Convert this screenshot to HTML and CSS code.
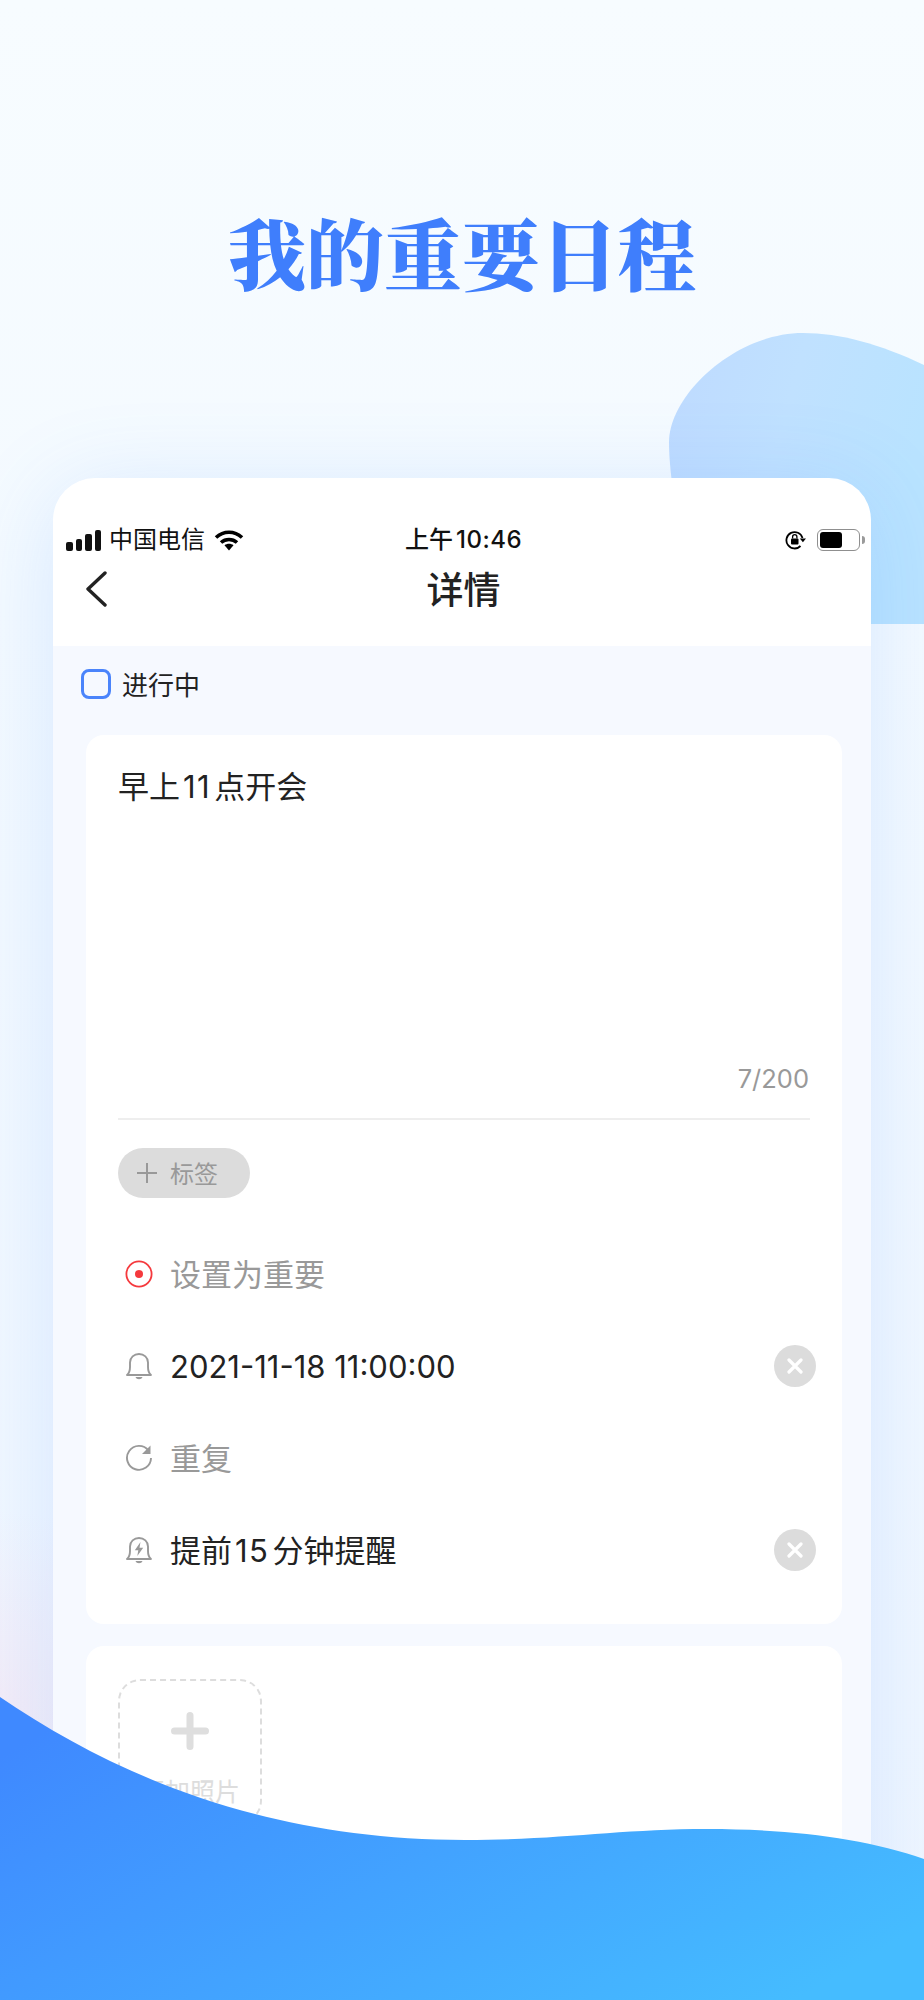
FILE: index.html
```html
<!DOCTYPE html>
<html lang="zh-CN">
<head>
  <meta charset="UTF-8">
  <title>我的重要日程</title>
  <link rel="stylesheet" href="styles.css">
</head>
<body>
  <div class="page">
    <svg class="blob" viewBox="0 0 924 2000">
      <defs>
        <linearGradient id="blob-fill" x1="0" y1="0" x2="1" y2="0.3">
          <stop offset="0" stop-color="#bedaff"/>
          <stop offset="0.5" stop-color="#c0e1ff"/>
          <stop offset="1" stop-color="#b9e3ff"/>
        </linearGradient>
      </defs>
      <path fill="url(#blob-fill)" d="M803 333C735 333 669 395 669 442C669 480 680 540 700 624L924 624L924 365C880 344 840 333 803 333Z"/>
    </svg>

    <h1 class="headline">我的重要日程</h1>

    <div class="phone">
      <div class="status-bar">
        <div class="status-left">
          <div class="signal"><i></i><i></i><i></i><i></i></div>
          <span>中国电信</span>
          <svg class="wifi" viewBox="0 0 30 22">
            <path fill="none" stroke="#000" stroke-width="3.6" d="M2 8.500C9.500 1.500 20.500 1.500 28 8.500"/>
            <path fill="none" stroke="#000" stroke-width="3.6" d="M7 13.500C11.500 9.500 18.500 9.500 23 13.500"/>
            <path fill="#000" d="M10.500 16.200C13 14.200 17 14.200 19.500 16.200L15 21.500Z"/>
          </svg>
        </div>
        <div class="status-time">上午<span class="num">10:46</span></div>
        <div class="status-right">
          <svg class="rotation" viewBox="0 0 22 20">
            <path fill="none" stroke="#000" stroke-width="1.8" d="M17.500 8A8.200 8.200 0 1 0 15.500 16"/>
            <path fill="#000" d="M14.800 8.500H21L17.900 12.200Z"/>
            <rect x="6" y="8.500" width="7.500" height="6" rx="1" fill="#000"/>
            <path fill="none" stroke="#000" stroke-width="1.3" d="M7.600 8.500V6.800A2.100 2.100 0 0 1 11.900 6.800V8.500"/>
          </svg>
          <div class="battery"><div class="battery-level"></div></div>
          <div class="battery-nub"></div>
        </div>
      </div>

      <div class="nav">
        <svg class="back" viewBox="0 0 22 36">
          <path fill="none" stroke="#222" stroke-width="3.4" stroke-linecap="round" stroke-linejoin="round" d="M20 2L3 18L20 34"/>
        </svg>
        <div class="nav-title">详情</div>
      </div>

      <div class="content">
        <div class="state">
          <div class="checkbox"></div>
          <span class="state-label">进行中</span>
        </div>

        <div class="card card-main">
          <div class="note">早上<span class="num">11</span>点开会</div>
          <div class="counter">7/200</div>
          <div class="divider"></div>
          <div class="tag">
            <svg class="tag-plus" viewBox="0 0 20 20">
              <path stroke="#999" stroke-width="2" d="M10 0V20M0 10H20"/>
            </svg>
            <span class="tag-label">标签</span>
          </div>

          <div class="rows">
            <div class="row">
              <svg class="row-icon" viewBox="0 0 28 28">
                <circle cx="14" cy="14" r="12.600" fill="none" stroke="#f5393d" stroke-width="1.8"/>
                <circle cx="14" cy="14" r="4" fill="#f5393d"/>
              </svg>
              <span class="row-text cjk muted">设置为重要</span>
            </div>
            <div class="row">
              <svg class="row-icon" viewBox="0 0 28 28">
                <path fill="none" stroke="#999" stroke-width="1.9" stroke-linejoin="round" d="M2 23C4.500 21 5 18.500 5 15V10.500C5 5.500 9 2 14 2S23 5.500 23 10.500V15C23 18.500 23.500 21 26 23Z"/>
                <path fill="#999" d="M10.500 25H17.500C16.500 28 11.500 28 10.500 25Z"/>
              </svg>
              <span class="row-text">2021-11-18 11:00:00</span>
              <div class="clear"><svg viewBox="0 0 16 16"><path stroke="#fff" stroke-width="3.2" stroke-linecap="round" d="M2 2L14 14M14 2L2 14"/></svg></div>
            </div>
            <div class="row">
              <svg class="row-icon" viewBox="0 0 28 28">
                <path fill="none" stroke="#999" stroke-width="1.9" d="M23.500 6.500A12 12 0 1 0 26 14"/>
                <path fill="#999" d="M25.500 1.500V10H17Z"/>
              </svg>
              <span class="row-text cjk muted">重复</span>
            </div>
            <div class="row">
              <svg class="row-icon" viewBox="0 0 28 28">
                <path fill="none" stroke="#999" stroke-width="1.9" stroke-linejoin="round" d="M2 23C4.500 21 5 18.500 5 15V10.500C5 5.500 9 2 14 2S23 5.500 23 10.500V15C23 18.500 23.500 21 26 23Z"/>
                <path fill="#999" d="M10.500 25H17.500C16.500 28 11.500 28 10.500 25Z"/>
                <path fill="#999" d="M15.500 6L9.800 14.200H13.300L12.300 20L18.200 11.800H14.500Z"/>
              </svg>
              <span class="row-text cjk">提前<span class="num">15</span>分钟提醒</span>
              <div class="clear"><svg viewBox="0 0 16 16"><path stroke="#fff" stroke-width="3.2" stroke-linecap="round" d="M2 2L14 14M14 2L2 14"/></svg></div>
            </div>
          </div>
        </div>

        <div class="card card-photo">
          <div class="upload">
            <svg class="upload-plus" viewBox="0 0 38 38">
              <path stroke="#dedede" stroke-width="7" stroke-linecap="round" d="M19 3.500V34.500M3.500 19H34.500"/>
            </svg>
            <span>添加照片</span>
          </div>
        </div>
      </div>
    </div>

    <svg class="wave" viewBox="0 0 924 2000">
      <defs>
        <linearGradient id="wave-fill" x1="0" y1="0.2" x2="1" y2="0.75">
          <stop offset="0" stop-color="#3f89ff"/>
          <stop offset="1" stop-color="#45bcff"/>
        </linearGradient>
      </defs>
      <path fill="url(#wave-fill)" d="M0 1697C110 1772 260 1840 465 1840C560 1840 620 1829 707 1829C790 1829 865 1838 924 1859V2000H0Z"/>
    </svg>
  </div>
</body>
</html>
```

FILE: styles.css
```css
* {
  margin: 0;
  padding: 0;
  box-sizing: border-box;
}

body {
  font-family: Inter, "Noto Sans CJK SC", sans-serif;
  color: #222;
}

.page {
  position: relative;
  width: 924px;
  height: 2000px;
  overflow: hidden;
  padding-top: 208px;
  background:
    radial-gradient(circle at 0 1720px, rgba(246, 226, 240, 0.55), rgba(246, 226, 240, 0) 210px),
    linear-gradient(180deg, #f7fcff 0%, #f4faff 30%, #eff6ff 100%);
}

.blob,
.wave {
  position: absolute;
  left: 0;
  top: 0;
  width: 924px;
  height: 2000px;
}

.wave {
  z-index: 3;
}

.headline {
  position: relative;
  height: 86px;
  font-family: "Noto Serif CJK SC", "Noto Sans CJK SC", serif;
  font-size: 78px;
  line-height: 86px;
  font-weight: 900;
  text-align: center;
  color: #3f7efc;
}

.phone {
  position: relative;
  z-index: 2;
  width: 818px;
  height: 1600px;
  margin: 184px 0 0 53px;
  background: #fff;
  border-radius: 42px 42px 0 0;
  box-shadow: 0 12px 90px rgba(70, 145, 255, 0.17);
}

.num {
  margin: 0 3px;
  letter-spacing: 1.500px;
}

.status-bar {
  display: flex;
  align-items: center;
  justify-content: space-between;
  height: 82px;
  padding: 42px 6px 0 13px;
  font-size: 24px;
  line-height: 28px;
  color: #111;
  position: relative;
}

.status-left {
  display: flex;
  align-items: center;
}

.signal {
  display: flex;
  align-items: flex-end;
  gap: 3px;
  height: 21px;
  margin-right: 8px;
}

.signal i {
  display: block;
  width: 6.500px;
  background: #111;
  border-radius: 2px;
}

.signal i:nth-child(1) { height: 9px; }
.signal i:nth-child(2) { height: 12px; }
.signal i:nth-child(3) { height: 17px; }
.signal i:nth-child(4) { height: 21px; }

.wifi {
  width: 30px;
  height: 22px;
  margin-left: 9px;
}

.status-time {
  position: absolute;
  left: 3px;
  right: 0;
  text-align: center;
  font-weight: 500;
  font-size: 24px;
}

.status-time .num {
  margin: 0 0 0 3px;
  letter-spacing: 0.500px;
}

.status-right {
  display: flex;
  align-items: center;
}

.rotation {
  width: 22px;
  height: 20px;
  margin-right: 10px;
}

.battery {
  width: 43px;
  height: 22px;
  border: 1.500px solid #8f8f8f;
  border-radius: 6px;
  padding: 2px;
}

.battery-level {
  width: 22px;
  height: 100%;
  background: #000;
  border-radius: 3px;
}

.battery-nub {
  width: 3px;
  height: 8px;
  margin-left: 2px;
  background: #9a9a9a;
  border-radius: 0 3px 3px 0;
}

.nav {
  position: relative;
  height: 86px;
  padding: 0 0 29px 32px;
  display: flex;
  align-items: center;
}

.back {
  width: 22px;
  height: 36px;
}

.nav-title {
  position: absolute;
  left: 3px;
  right: 0;
  top: 5px;
  text-align: center;
  font-size: 37px;
  line-height: 52px;
  font-weight: 500;
}

.content {
  background: #f6f9ff;
  padding: 23px 29px 0 33px;
  height: 1400px;
}

.state {
  display: flex;
  align-items: center;
  height: 30px;
  margin: 0 0 36px -5px;
  font-size: 26px;
}

.state-label {
  padding-bottom: 2px;
}

.checkbox {
  width: 30px;
  height: 30px;
  border: 3px solid #4a84fb;
  border-radius: 8px;
  margin-right: 11px;
}

.card {
  background: #fff;
  border-radius: 18px;
}

.card-main {
  padding: 30px 32px 28px;
}

.note {
  font-size: 31px;
  line-height: 44px;
  height: 295px;
}

.counter {
  height: 36px;
  padding: 1px 1px 0 0;
  font-size: 25.500px;
  line-height: 36px;
  text-align: right;
  color: #999;
}

.divider {
  height: 2px;
  margin-top: 22px;
  background: #eee;
}

.tag {
  display: flex;
  align-items: center;
  width: 132px;
  height: 50px;
  margin-top: 28px;
  padding-left: 19px;
  background: #dcdcdc;
  border-radius: 25px;
  font-size: 24px;
  color: #999;
}

.tag-label {
  padding-bottom: 2px;
}

.tag-plus {
  width: 20px;
  height: 20px;
  margin-right: 13px;
}

.rows {
  margin-top: 30px;
}

.row {
  display: flex;
  align-items: center;
  height: 92px;
}

.row-icon {
  width: 28px;
  height: 28px;
  margin: 0 17px 0 7px;
}

.row-text {
  flex: 1;
  font-size: 31px;
}

.cjk {
  padding-bottom: 3px;
}

.muted {
  color: #999;
}

.clear {
  display: flex;
  align-items: center;
  justify-content: center;
  width: 42px;
  height: 42px;
  margin-right: -6px;
  background: #dcdcdc;
  border-radius: 50%;
}

.clear svg {
  width: 16px;
  height: 16px;
}

.card-photo {
  height: 400px;
  margin-top: 22px;
  padding: 33px 32px;
}

.upload {
  display: flex;
  flex-direction: column;
  align-items: center;
  width: 144px;
  height: 144px;
  padding-top: 31px;
  border: 2px dashed #ddd;
  border-radius: 22px;
  font-size: 25px;
  color: #ddd;
}

.upload-plus {
  width: 38px;
  height: 38px;
  margin-bottom: 22px;
}
```
